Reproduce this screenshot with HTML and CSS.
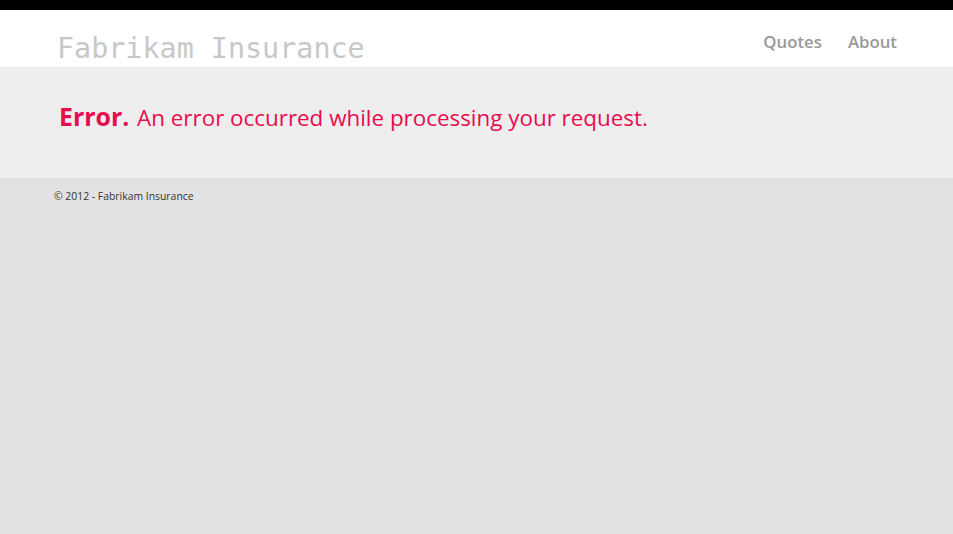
FILE: index.html
```html
<!DOCTYPE html>
<html lang="en">
<head>
<meta charset="utf-8">
<title>Error - Fabrikam Insurance</title>
<link rel="stylesheet" href="styles.css">
</head>
<body>
<header class="site-header">
  <div class="header-inner">
    <p class="site-title">Fabrikam Insurance</p>
    <nav class="menu">
      <a href="#" class="menu-link">Quotes</a>
      <a href="#" class="menu-link">About</a>
    </nav>
  </div>
</header>
<main class="main-band">
  <div class="title-group">
    <h1 class="error-title">Error.</h1>
    <h2 class="error-message">An error occurred while processing your request.</h2>
  </div>
</main>
<footer class="site-footer">
  <p class="copyright">&copy; 2012 - Fabrikam Insurance</p>
</footer>
</body>
</html>
```
FILE: styles.css
```css
html {
  background-color: #e2e2e2;
}
body {
  margin: 0;
  padding: 0;
  border-top: 10px solid #000;
  color: #333;
  font-family: "Open Sans", "Noto Sans", sans-serif;
}
.site-header {
  background-color: #fff;
  height: 57px;
}
.header-inner {
  display: flex;
  justify-content: space-between;
  align-items: flex-start;
  padding: 0 56px 0 57px;
}
.site-title {
  margin: 22px 0 0 0;
  font-family: "DejaVu Sans Mono", "Liberation Mono", monospace;
  font-size: 28.4px;
  line-height: 34px;
  color: #c8c8c8;
}
.menu {
  display: flex;
  gap: 26px;
  margin-top: 20px;
}
.menu-link {
  font-size: 16.8px;
  line-height: 24px;
  font-weight: 600;
  color: #999;
  text-decoration: none;
}
.main-band {
  background-color: #efeeef;
  height: 111px;
  box-sizing: border-box;
  padding: 31px 0 0 59px;
}
.title-group {
  font-size: 22px;
  line-height: 36px;
  color: #e80c4d;
  white-space: nowrap;
}
.error-title {
  display: inline;
  margin: 0;
  font-size: 24.9px;
  font-weight: 700;
}
.error-message {
  display: inline;
  margin: 0 0 0 2px;
  font-size: 22.4px;
  font-weight: 400;
}
.site-footer {
  padding: 10px 0 0 54px;
}
.copyright {
  margin: 0;
  font-size: 10.4px;
  line-height: 16px;
  color: #333;
}
```
